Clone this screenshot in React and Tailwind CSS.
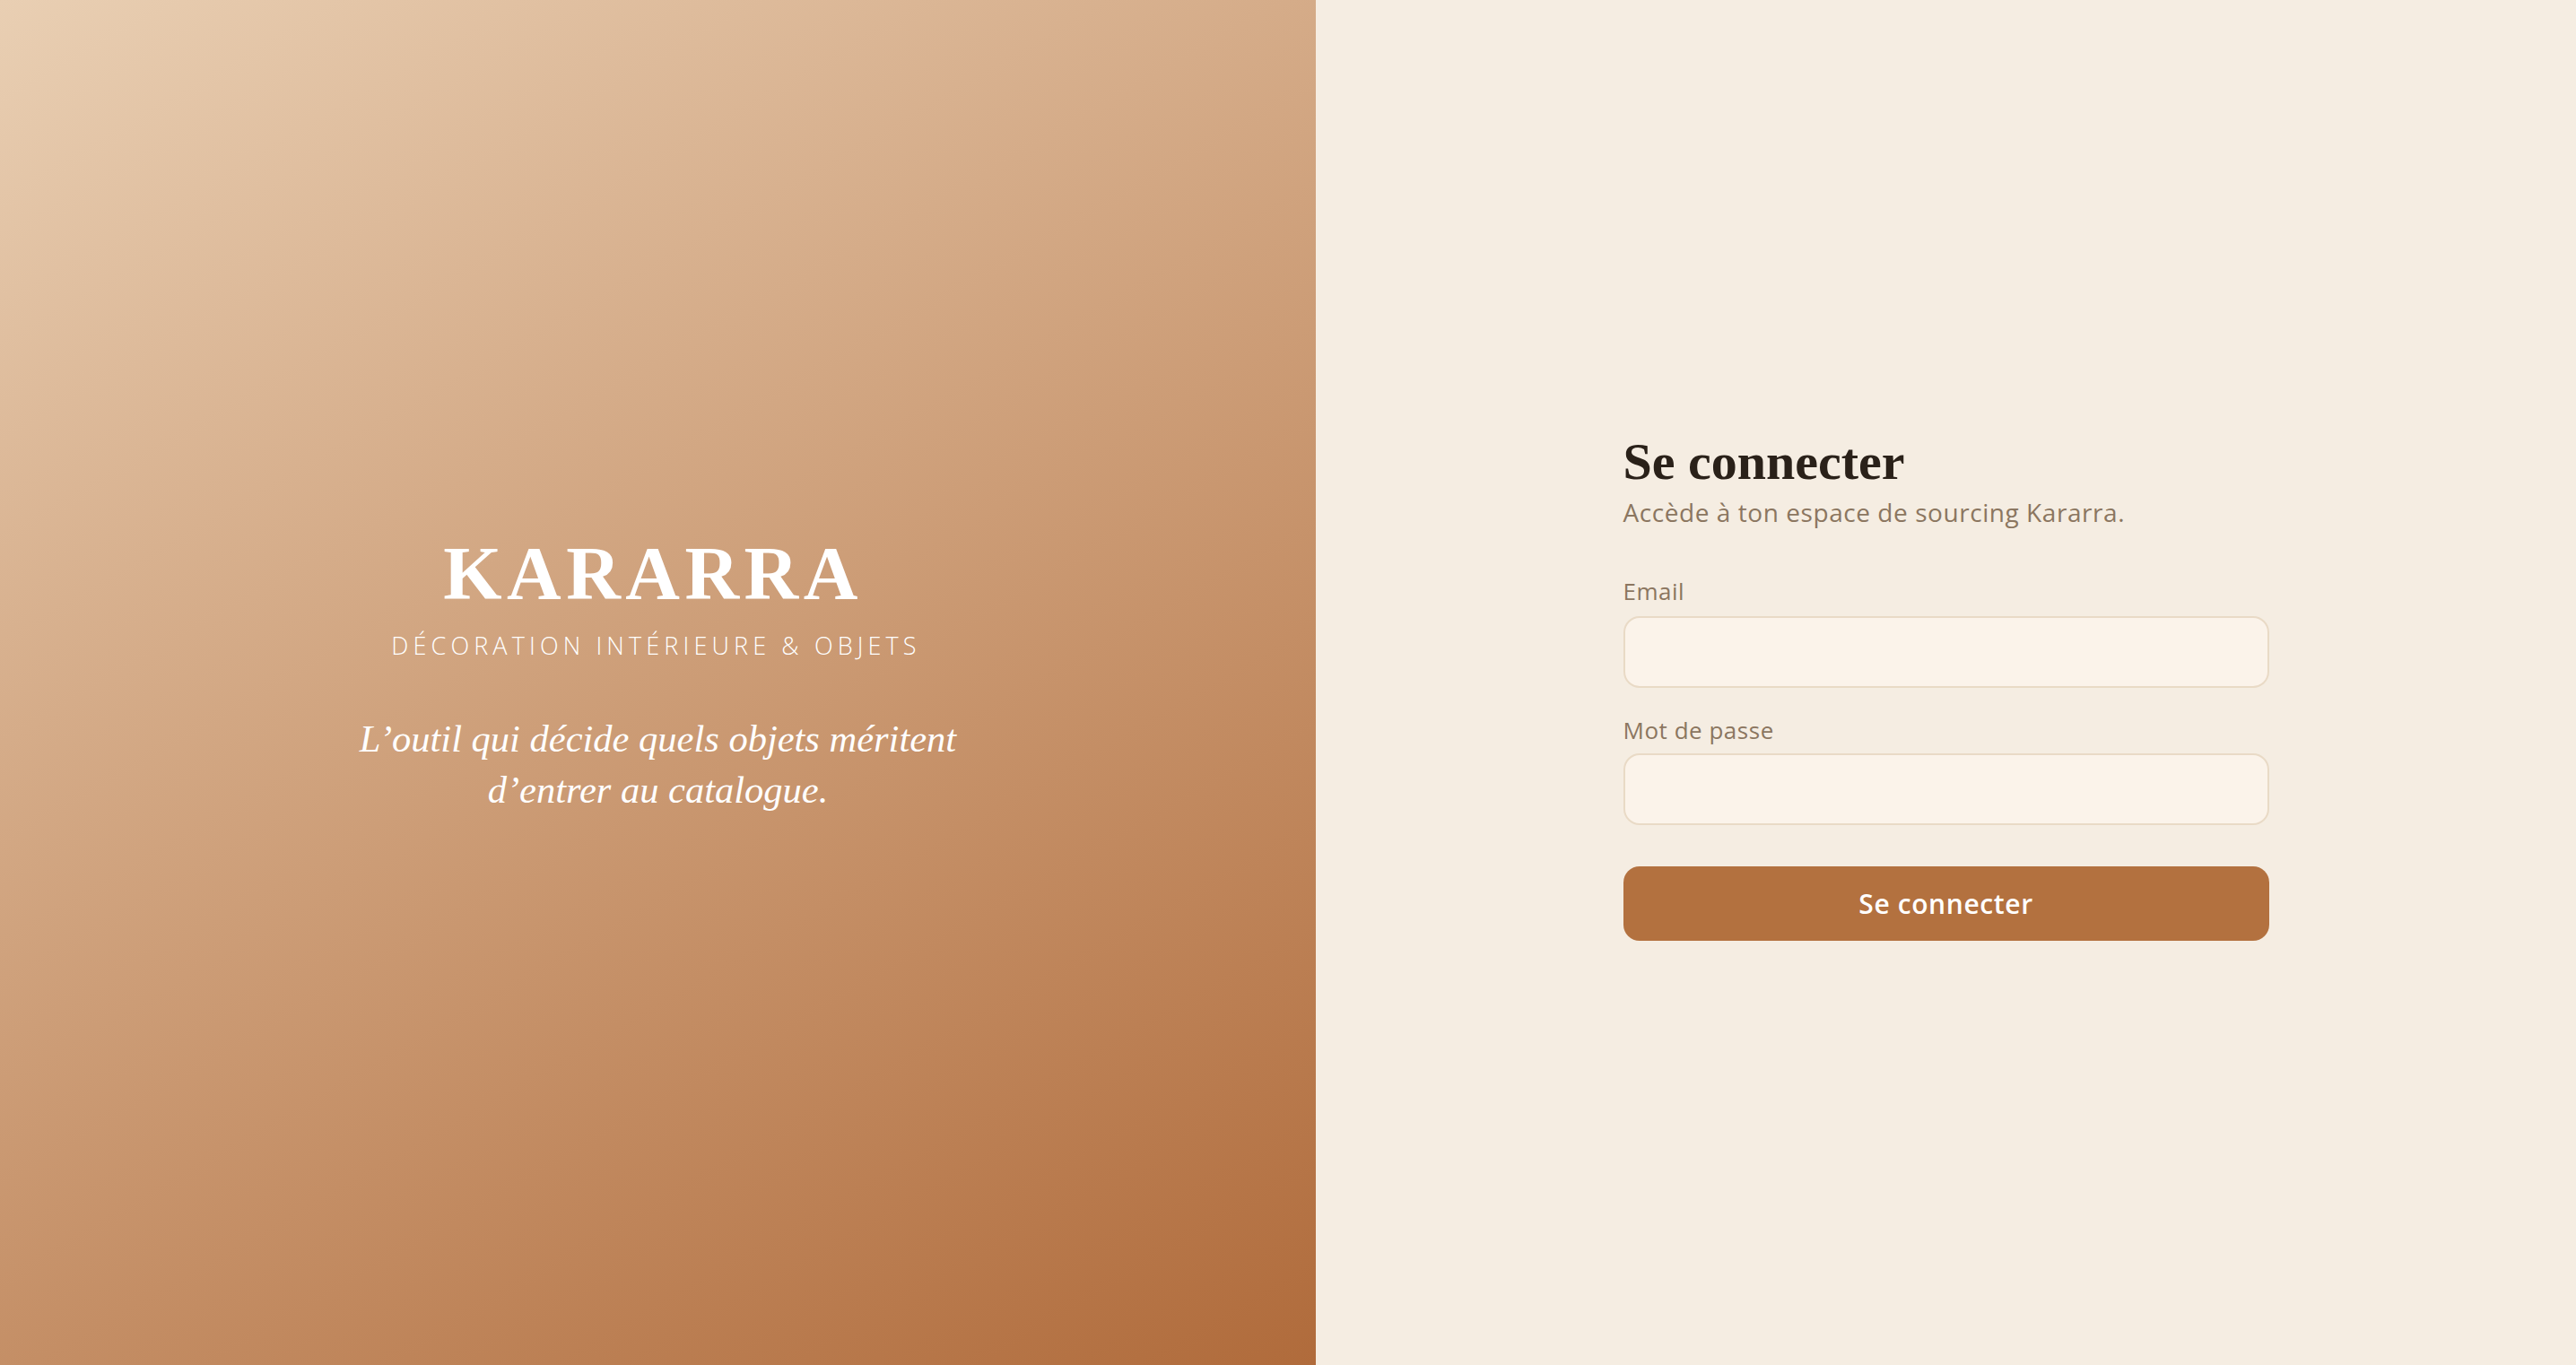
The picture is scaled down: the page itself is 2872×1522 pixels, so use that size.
import React, { useState } from 'react';

const serif = "font-['Liberation_Serif','DejaVu_Serif',serif]";
const sans = "font-['Open_Sans','Lato',sans-serif]";

const LoginPage = () => {
  const [form, setForm] = useState({ email: '', password: '' });

  const handleChange = e => {
    const { name, value } = e.target;
    setForm(f => ({ ...f, [name]: value }));
  };

  const handleSubmit = e => {
    e.preventDefault();
  };

  return (
    <div className="flex h-[1522px] w-full">
      {/* panneau marque */}
      <div className="flex w-[1467px] shrink-0 flex-col items-center justify-center bg-[linear-gradient(150deg,#e9cfb3,#b06b3b)] pt-2 pb-[23px] text-center text-white">
        <h1 className={`${serif} text-[84px] font-bold leading-none tracking-[0.065em] pr-[11px]`}>KARARRA</h1>
        <p className={`${sans} mt-[18px] text-[27px] font-light tracking-[0.19em] pr-[4px]`}>
          DÉCORATION INTÉRIEURE &amp; OBJETS
        </p>
        <p className={`${serif} mt-[55px] text-[42.5px] italic leading-[57px]`}>
          L’outil qui décide quels objets méritent
          <br />
          d’entrer au catalogue.
        </p>
      </div>

      {/* formulaire */}
      <div className="flex flex-1 items-center justify-center bg-[#f5ede2] pt-[12px]">
        <form onSubmit={handleSubmit} className="w-[720px]">
          <h2 className={`${serif} text-[58px] font-bold leading-none text-[#2a2119]`}>Se connecter</h2>
          <p className={`${sans} mt-[7px] text-[28px] leading-[40px] tracking-[0.02em] text-[#8b7660]`}>
            Accède à ton espace de sourcing Kararra.
          </p>

          <label className={`${sans} mt-[50px] block text-[26px] leading-[36px] tracking-[0.02em] text-[#8b7660]`}>Email</label>
          <input
            name="email"
            type="email"
            value={form.email}
            onChange={handleChange}
            className="mt-[10px] block h-[80px] w-full rounded-[18px] border-2 border-[#e9dac6] bg-[#fbf3ea] px-5 text-[26px] outline-none"
          />

          <label className={`${sans} mt-[29px] block text-[26px] leading-[36px] tracking-[0.02em] text-[#8b7660]`}>Mot de passe</label>
          <input
            name="password"
            type="password"
            value={form.password}
            onChange={handleChange}
            className="mt-[8px] block h-[80px] w-full rounded-[18px] border-2 border-[#e9dac6] bg-[#fbf3ea] px-5 text-[26px] outline-none"
          />

          <button
            type="submit"
            className={`${sans} mt-[46px] block h-[83px] w-full rounded-[18px] bg-[#b3713f] text-[30px] font-semibold tracking-[0.02em] text-white`}
          >
            Se connecter
          </button>
        </form>
      </div>
    </div>
  );
};

export default LoginPage;
